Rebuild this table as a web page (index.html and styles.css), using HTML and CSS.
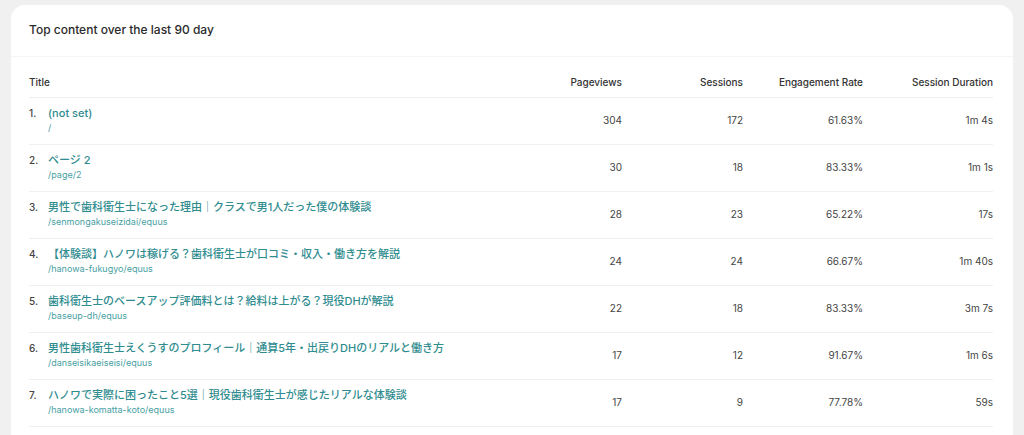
FILE: index.html
```html
<!DOCTYPE html>
<html lang="ja">
<head>
<meta charset="utf-8">
<title>Top content</title>
<link rel="stylesheet" href="styles.css">
</head>
<body>
<section class="card">
  <header class="card-head">
    <h2 class="card-title">Top content over the last 90 day</h2>
  </header>
  <div class="card-body">
    <div class="grid head">
      <div class="c-title">Title</div>
      <div class="num">Pageviews</div>
      <div class="num">Sessions</div>
      <div class="num">Engagement Rate</div>
      <div class="num">Session Duration</div>
    </div>
    <div class="grid row">
      <div class="c-title"><span class="idx">1.</span><div class="page"><a class="name">(not set)</a><span class="url">/</span></div></div>
      <div class="num">304</div><div class="num">172</div><div class="num">61.63%</div><div class="num">1m 4s</div>
    </div>
    <div class="grid row">
      <div class="c-title"><span class="idx">2.</span><div class="page"><a class="name">ページ 2</a><span class="url">/page/2</span></div></div>
      <div class="num">30</div><div class="num">18</div><div class="num">83.33%</div><div class="num">1m 1s</div>
    </div>
    <div class="grid row">
      <div class="c-title"><span class="idx">3.</span><div class="page"><a class="name">男性で歯科衛生士になった理由｜クラスで男1人だった僕の体験談</a><span class="url">/senmongakuseizidai/equus</span></div></div>
      <div class="num">28</div><div class="num">23</div><div class="num">65.22%</div><div class="num">17s</div>
    </div>
    <div class="grid row">
      <div class="c-title"><span class="idx">4.</span><div class="page"><a class="name">【体験談】ハノワは稼げる？歯科衛生士が口コミ・収入・働き方を解説</a><span class="url">/hanowa-fukugyo/equus</span></div></div>
      <div class="num">24</div><div class="num">24</div><div class="num">66.67%</div><div class="num">1m 40s</div>
    </div>
    <div class="grid row">
      <div class="c-title"><span class="idx">5.</span><div class="page"><a class="name">歯科衛生士のベースアップ評価料とは？給料は上がる？現役DHが解説</a><span class="url">/baseup-dh/equus</span></div></div>
      <div class="num">22</div><div class="num">18</div><div class="num">83.33%</div><div class="num">3m 7s</div>
    </div>
    <div class="grid row">
      <div class="c-title"><span class="idx">6.</span><div class="page"><a class="name">男性歯科衛生士えくうすのプロフィール｜通算5年・出戻りDHのリアルと働き方</a><span class="url">/danseisikaeiseisi/equus</span></div></div>
      <div class="num">17</div><div class="num">12</div><div class="num">91.67%</div><div class="num">1m 6s</div>
    </div>
    <div class="grid row">
      <div class="c-title"><span class="idx">7.</span><div class="page"><a class="name">ハノワで実際に困ったこと5選｜現役歯科衛生士が感じたリアルな体験談</a><span class="url">/hanowa-komatta-koto/equus</span></div></div>
      <div class="num">17</div><div class="num">9</div><div class="num">77.78%</div><div class="num">59s</div>
    </div>
  </div>
</section>
</body>
</html>
```
FILE: styles.css
```css
html, body {
  margin: 0;
  padding: 0;
  height: 100%;
  overflow: hidden;
}
body {
  background: #f0f0f0;
  font-family: Inter, "Noto Sans CJK JP", sans-serif;
  color: #3c3c3c;
  padding: 5px 11px 0 11px;
  box-sizing: border-box;
}
.card {
  background: #fff;
  border-radius: 14px;
  min-height: 600px;
}
.card-head {
  padding: 16px 18px 17px 18px;
  border-bottom: 1px solid #f4f4f4;
}
.card-title {
  margin: 0;
  font-size: 12px;
  line-height: 18px;
  font-weight: 500;
  color: #2a2a2a;
}
.card-body {
  padding: 0 20px 0 18px;
}
.grid {
  display: grid;
  grid-template-columns: 1fr 150px 121px 120px 130px;
  align-items: center;
  border-bottom: 1px solid #efefef;
}
.head {
  padding: 17px 0 7px 0;
  font-size: 10px;
  line-height: 16px;
  font-weight: 500;
  color: #333;
}
.row {
  padding: 7px 0 10px 0;
  font-size: 10px;
  color: #444;
}
.num {
  text-align: right;
  line-height: 16px;
}
.row .c-title {
  display: flex;
  align-items: flex-start;
  white-space: nowrap;
}
.idx {
  width: 19px;
  flex: none;
  font-size: 10px;
  line-height: 16px;
  color: #444;
  font-weight: 500;
}
.page {
  display: flex;
  flex-direction: column;
}
.name {
  font-size: 11px;
  line-height: 16px;
  color: #2f8c8f;
  font-weight: 500;
}
.url {
  font-size: 9px;
  line-height: 13px;
  color: #48a0a2;
}
```
